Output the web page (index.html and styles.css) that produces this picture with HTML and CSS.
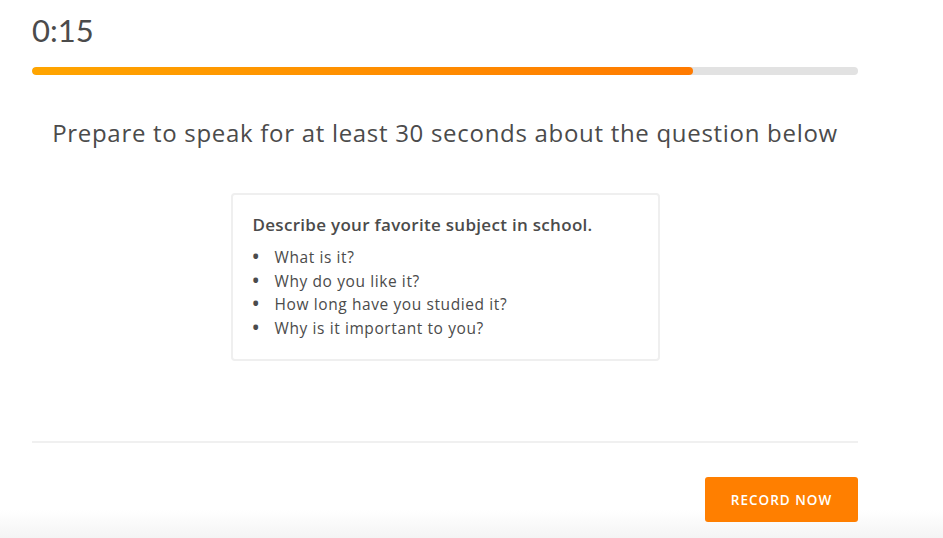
FILE: index.html
```html
<!DOCTYPE html>
<html lang="en">
<head>
  <meta charset="UTF-8" />
  <title>Speaking Prep</title>
  <link rel="stylesheet" href="styles.css">
</head>
<body>
  <div class="page">
    <div class="timer">0:15</div>
    <div class="progress">
      <div class="progress-fill" style="width: 80%;"></div>
    </div>

    <h1 class="prompt">Prepare to speak for at least 30 seconds about the question below</h1>

    <div class="card">
      <div class="card-title">Describe your favorite subject in school.</div>
      <ul class="points">
        <li>What is it?</li>
        <li>Why do you like it?</li>
        <li>How long have you studied it?</li>
        <li>Why is it important to you?</li>
      </ul>
    </div>

    <div class="footer">
      <button class="record">RECORD NOW</button>
    </div>
  </div>
</body>
</html>
```

FILE: styles.css
```css
html, body {
  height: 100%;
}
body {
  margin: 0;
  font-family: 'Open Sans', Lato, sans-serif;
  color: #4b4b4b;
  background: linear-gradient(to bottom, #fff 0, #fff 510px, #f4f4f4 538px);
}
.page {
  width: 826px;
  margin-left: 32px;
  padding-top: 10px;
}
.timer {
  font-family: Lato, sans-serif;
  font-size: 31px;
  line-height: 40px;
  color: #4b4b4b;
}
.progress {
  margin-top: 17px;
  height: 8px;
  background: #e2e2e2;
  border-radius: 4px;
  overflow: hidden;
}
.progress-fill {
  height: 100%;
  border-radius: 4px;
  background: linear-gradient(to right, #ffa500, #ff7a00);
}
.prompt {
  margin: 43px 0 0;
  text-align: center;
  font-size: 24px;
  font-weight: 400;
  letter-spacing: 0.7px;
  line-height: 30px;
  color: #4b4b4b;
}
.card {
  width: 385px;
  margin: 45px auto 0;
  padding: 19px 20px 19px;
  border: 2px solid #efefef;
  border-radius: 4px;
}
.card-title {
  font-size: 17px;
  font-weight: 600;
  letter-spacing: 0.3px;
  line-height: 22px;
  color: #4b4b4b;
}
.points {
  list-style: none;
  margin: 10px 0 0;
  padding: 0;
  font-size: 15.5px;
  letter-spacing: 0.6px;
  line-height: 23.5px;
}
.points li::before {
  content: "•";
  display: inline-block;
  width: 22px;
  font-weight: 700;
  font-size: 17px;
  line-height: 1;
}
.footer {
  margin-top: 80px;
  border-top: 2px solid #f0f0f0;
  padding-top: 34px;
  display: flex;
  justify-content: flex-end;
}
.record {
  width: 153px;
  height: 45px;
  border: none;
  border-radius: 3px;
  background: #ff7f00;
  color: #fff;
  font-family: 'Open Sans', Lato, sans-serif;
  font-size: 13.5px;
  font-weight: 600;
  letter-spacing: 1px;
  cursor: pointer;
}
```
